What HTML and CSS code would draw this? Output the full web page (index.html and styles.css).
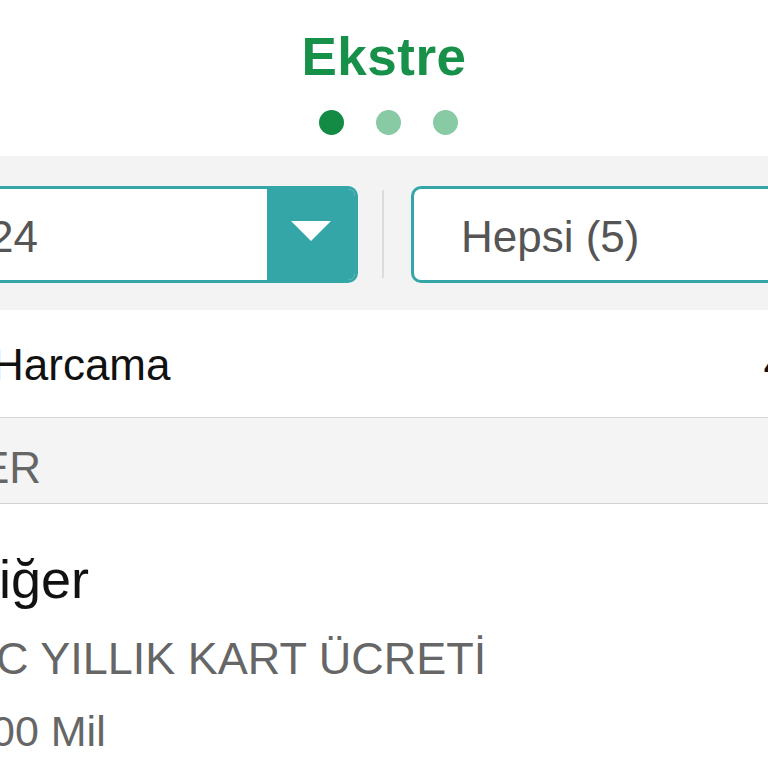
FILE: index.html
```html
<!DOCTYPE html>
<html lang="tr">
<head>
<meta charset="utf-8">
<title>Ekstre</title>
<link rel="stylesheet" href="styles.css">
</head>
<body>
<div class="screen">
  <header class="header">
    <h1 class="title">Ekstre</h1>
    <div class="dots">
      <span class="dot active"></span>
      <span class="dot"></span>
      <span class="dot"></span>
    </div>
  </header>

  <section class="filters">
    <div class="select">
      <span class="select-text">24</span>
      <span class="select-btn"><span class="caret"></span></span>
    </div>
    <span class="sep"></span>
    <div class="select select-right">
      <span class="select-text">Hepsi (5)</span>
    </div>
  </section>

  <div class="total-row">
    <span class="total-label">Harcama</span>
    <span class="total-value">4</span>
  </div>

  <div class="section-head">ER</div>

  <div class="item">
    <div class="item-title">iğer</div>
    <div class="item-desc">C YILLIK KART ÜCRETİ</div>
    <div class="item-mil">00 Mil</div>
  </div>
</div>
</body>
</html>
```

FILE: styles.css
```css
html, body {
  margin: 0;
  padding: 0;
  background: #ffffff;
}
body {
  width: 768px;
  height: 768px;
  overflow: hidden;
  font-family: "Liberation Sans", Arial, sans-serif;
}
.screen {
  width: 768px;
  overflow: hidden;
}
.header {
  height: 156px;
  display: flex;
  flex-direction: column;
  align-items: center;
  padding-top: 30px;
  box-sizing: border-box;
}
.title {
  margin: 0;
  font-size: 53px;
  line-height: 53px;
  font-weight: bold;
  color: #17914a;
  letter-spacing: 0.5px;
}
.dots {
  display: flex;
  gap: 32px;
  margin-top: 27px;
  margin-left: 8px;
}
.dot {
  width: 25px;
  height: 25px;
  border-radius: 50%;
  background: #88caa3;
}
.dot.active {
  background: #138b45;
}
.filters {
  height: 154px;
  background: #f3f3f3;
  display: flex;
  align-items: flex-start;
  padding-top: 30px;
  box-sizing: border-box;
}
.select {
  flex: none;
  width: 418px;
  height: 97px;
  margin-left: -60px;
  box-sizing: border-box;
  border: 3px solid #35a6a8;
  border-radius: 10px;
  background: #ffffff;
  display: flex;
  align-items: center;
  overflow: hidden;
}
.select-text {
  flex: 1;
  font-size: 44px;
  color: #555555;
  padding-left: 46px;
  padding-top: 4px;
}
.select-btn {
  width: 88px;
  align-self: stretch;
  background: #35a6a8;
  display: flex;
  align-items: center;
  justify-content: center;
}
.caret {
  width: 0;
  height: 0;
  border-left: 20px solid transparent;
  border-right: 20px solid transparent;
  border-top: 20px solid #ffffff;
  margin-bottom: 8px;
}
.sep {
  flex: none;
  width: 2px;
  height: 88px;
  background: #dcdcdc;
  margin-left: 24px;
  margin-top: 4px;
}
.select-right {
  margin-left: 27px;
  width: 420px;
}
.select-right .select-text {
  padding-left: 47px;
  font-size: 44px;
}
.total-row {
  height: 108px;
  display: flex;
  align-items: center;
  justify-content: space-between;
  border-bottom: 1px solid #d6d6d6;
  box-sizing: border-box;
  overflow: hidden;
}
.total-label {
  font-size: 44px;
  color: #111111;
  margin-left: -8px;
  padding-top: 2px;
}
.total-value {
  font-size: 44px;
  color: #111111;
  margin-right: -20px;
}
.section-head {
  height: 86px;
  background: #f4f4f4;
  border-bottom: 1px solid #d3d3d3;
  box-sizing: border-box;
  display: flex;
  align-items: center;
  font-size: 44px;
  color: #666666;
  margin-left: -20px;
  padding-top: 14px;
}
.item {
  padding-top: 44px;
  overflow: hidden;
}
.item-title {
  font-size: 54px;
  line-height: 62px;
  color: #111111;
  margin-left: -1px;
}
.item-desc {
  font-size: 45px;
  line-height: 52px;
  color: #666666;
  margin-top: 23px;
  margin-left: -4px;
}
.item-mil {
  font-size: 43px;
  line-height: 50px;
  color: #666666;
  margin-top: 21px;
  margin-left: -9px;
}
```
